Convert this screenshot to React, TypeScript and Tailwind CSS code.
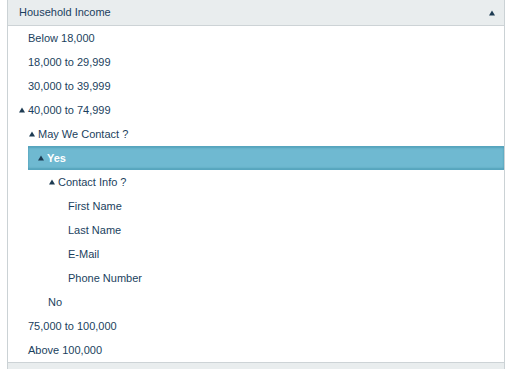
import React from "react";

type Node = {
  label: string;
  level: number;
  open?: boolean;
  selected?: boolean;
};

const rows: Node[] = [
  { label: "Below 18,000", level: 0 },
  { label: "18,000 to 29,999", level: 0 },
  { label: "30,000 to 39,999", level: 0 },
  { label: "40,000 to 74,999", level: 0, open: true },
  { label: "May We Contact ?", level: 1, open: true },
  { label: "Yes", level: 2, open: true, selected: true },
  { label: "Contact Info ?", level: 3, open: true },
  { label: "First Name", level: 4 },
  { label: "Last Name", level: 4 },
  { label: "E-Mail", level: 4 },
  { label: "Phone Number", level: 4 },
  { label: "No", level: 2 },
  { label: "75,000 to 100,000", level: 0 },
  { label: "Above 100,000", level: 0 },
];

const Arrow = () => (
  <svg width="6" height="6" viewBox="0 0 6 6" className="shrink-0">
    <polygon points="3,0.5 6,5.5 0,5.5" fill="#1d3b52" />
  </svg>
);

const App = () => {
  return (
    <div className="w-[513px] h-[369px] bg-white overflow-hidden font-['Liberation_Sans',Arial,sans-serif] text-[11px] text-[#1b3f5e]">
      <div className="ml-[7px] w-[498px] h-full border-x border-[#cbd2d5] flex flex-col">
        <div className="h-[26px] shrink-0 bg-[#e9edee] border-b border-[#cdd3d6] flex items-center justify-between pl-[11px] pr-[9px]">
          <span>Household Income</span>
          <Arrow />
        </div>

        <div className="flex flex-col">
          {rows.map((row, i) =>
            row.selected ? (
              <div key={i} className="h-6 flex pl-5">
                <div className="flex-1 flex items-center pl-[10px] bg-[#6fb9d1] border-y border-[#57a5be] shadow-[inset_0_1px_2px_rgba(40,120,150,0.35),inset_0_-1px_2px_rgba(40,120,150,0.35)]">
                  <Arrow />
                  <span className="ml-[3px] font-bold text-white">{row.label}</span>
                </div>
              </div>
            ) : (
              <div
                key={i}
                className="h-6 flex items-center"
                style={{ paddingLeft: 20 + row.level * 10 - (row.open ? 9 : 0) }}
              >
                {row.open && <Arrow />}
                <span className={row.open ? "ml-[3px]" : ""}>{row.label}</span>
              </div>
            ),
          )}
        </div>

        <div className="flex-1 bg-[#e9edee] border-t border-[#cdd3d6]" />
      </div>
    </div>
  );
};

export default App;
